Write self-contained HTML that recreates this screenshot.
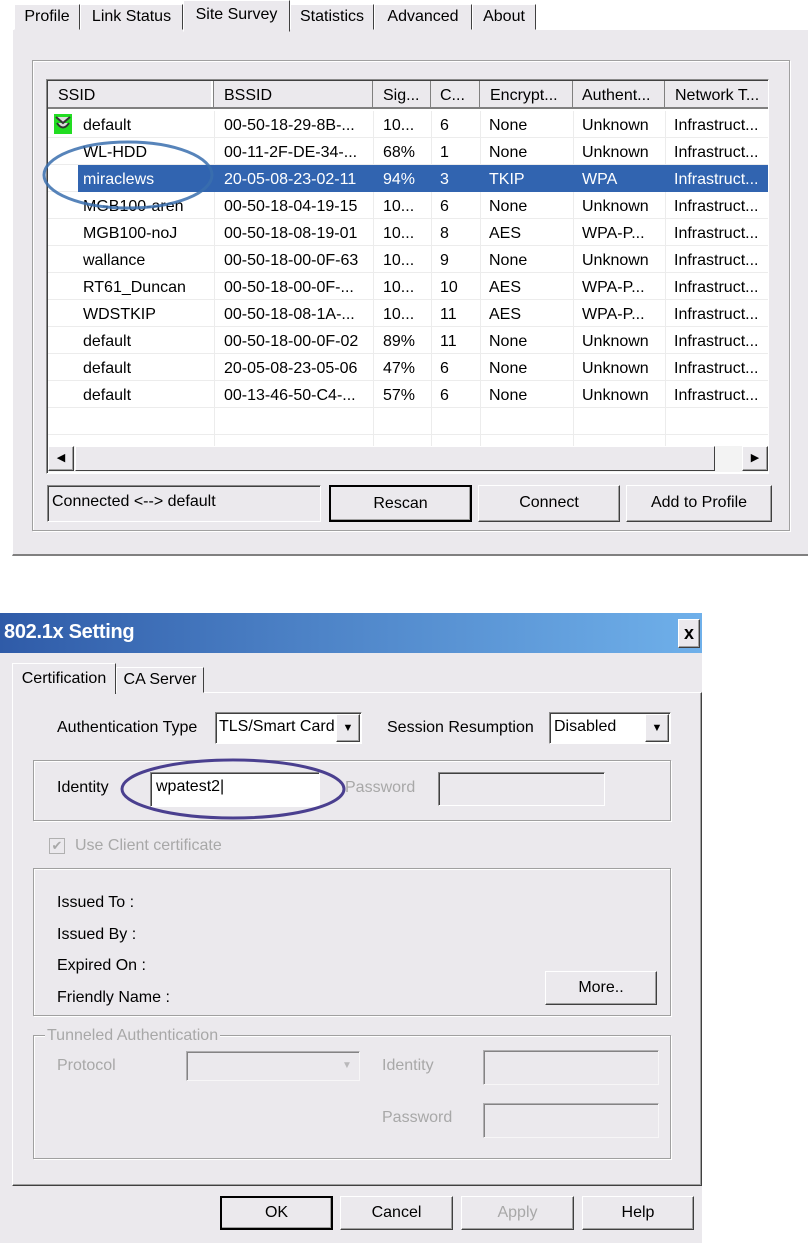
<!DOCTYPE html>
<html><head><meta charset="utf-8"><style>
*{box-sizing:border-box;margin:0;padding:0}
body{width:808px;height:1243px;background:#fff;position:relative;font-family:"Liberation Sans",sans-serif;font-size:16px;color:#000;overflow:hidden}
.a{position:absolute}
.bg{background:#ebe9ed}
.sunk{border:1px solid;border-color:#8a8a8a #fff #fff #8a8a8a;box-shadow:inset 1px 1px 0 #404040}
.grp{border:1px solid #a0a0a0;box-shadow:1px 1px 0 #fff, inset 1px 1px 0 #fff}
.btn{position:absolute;background:#ebe9ed;border:1px solid;border-color:#fff #404040 #404040 #fff;box-shadow:inset -1px -1px 0 #a0a0a0;text-align:center;line-height:34px}
.tab{position:absolute;top:4px;height:26px;border:1px solid;border-color:#fff #404040 transparent #fff;background:#ebe9ed;text-align:center;line-height:24px}
.row{position:absolute;left:0;height:27px;width:720px;border-bottom:1px solid #ececec}
.row span{position:absolute;top:6px;white-space:nowrap}
.sel{background:#3164b0;color:#fff}
.dis{color:#a8a8a8}
</style></head><body>
<div class="a bg" style="left:12px;top:29px;width:796px;height:527px;border-top:1px solid #fff;border-left:1px solid #fff;border-bottom:2px solid #808080"></div>
<div class="tab" style="left:14px;width:66px">Profile</div>
<div class="tab" style="left:80px;width:103px">Link Status</div>
<div class="tab" style="left:290px;width:84px">Statistics</div>
<div class="tab" style="left:374px;width:98px">Advanced</div>
<div class="tab" style="left:472px;width:64px">About</div>
<div class="tab" style="left:183px;width:107px;top:0;height:32px;padding-top:2px;z-index:2">Site Survey</div>
<div class="a grp" style="left:32px;top:60px;width:758px;height:471px"></div>
<div class="a sunk" style="left:46px;top:79px;width:723px;height:395px;background:#fff;overflow:hidden">
 <div class="a bg" style="left:1px;top:1px;width:720px;height:28px"></div>
 <div class="a" style="left:1px;top:1px;width:720px;height:28px;font-size:16px">
  <div class="a" style="left:0;width:166px;height:28px;border-right:1px solid #808080;box-shadow:inset -2px 0 0 #fff;padding:6px 10px">SSID</div>
  <div class="a" style="left:166px;width:159px;height:28px;border-right:1px solid #808080;padding:6px 10px">BSSID</div>
  <div class="a" style="left:325px;width:58px;height:28px;border-right:1px solid #808080;padding:6px 10px">Sig...</div>
  <div class="a" style="left:383px;width:49px;height:28px;border-right:1px solid #808080;padding:6px 9px">C...</div>
  <div class="a" style="left:432px;width:93px;height:28px;border-right:1px solid #808080;padding:6px 10px">Encrypt...</div>
  <div class="a" style="left:525px;width:92px;height:28px;border-right:1px solid #808080;padding:6px 9px">Authent...</div>
  <div class="a" style="left:617px;width:110px;height:28px;padding:6px 10px">Network T...</div>
  <div class="a" style="left:0;top:26px;width:720px;height:2px;background:#808080"></div>
 </div>
 <div class="a" style="left:1px;top:31px;width:720px;height:340px">
  <div class="a" style="left:166px;top:0;width:1px;height:340px;background:#ececec"></div>
  <div class="a" style="left:325px;top:0;width:1px;height:340px;background:#ececec"></div>
  <div class="a" style="left:383px;top:0;width:1px;height:340px;background:#ececec"></div>
  <div class="a" style="left:432px;top:0;width:1px;height:340px;background:#ececec"></div>
  <div class="a" style="left:525px;top:0;width:1px;height:340px;background:#ececec"></div>
  <div class="a" style="left:617px;top:0;width:1px;height:340px;background:#ececec"></div>
  <div class="row" style="top:0"><div class="a" style="left:6px;top:3px;width:18px;height:20px;background:#22dd22"><svg width="18" height="20"><path d="M2 3 L9 9 L16 3 M3 9 Q9 18 15 9" stroke="#333" stroke-width="2" fill="#ddd"/></svg></div><span style="left:35px">default</span><span style="left:176px">00-50-18-29-8B-...</span><span style="left:335px">10...</span><span style="left:392px">6</span><span style="left:441px">None</span><span style="left:534px">Unknown</span><span style="left:626px">Infrastruct...</span></div>
  <div class="row" style="top:27px"><span style="left:35px">WL-HDD</span><span style="left:176px">00-11-2F-DE-34-...</span><span style="left:335px">68%</span><span style="left:392px">1</span><span style="left:441px">None</span><span style="left:534px">Unknown</span><span style="left:626px">Infrastruct...</span></div>
  <div class="row" style="top:54px;"><div class="a sel" style="left:30px;top:0;width:690px;height:27px"></div><span style="left:35px;color:#fff">miraclews</span><span style="left:176px;color:#fff">20-05-08-23-02-11</span><span style="left:335px;color:#fff">94%</span><span style="left:392px;color:#fff">3</span><span style="left:441px;color:#fff">TKIP</span><span style="left:534px;color:#fff">WPA</span><span style="left:626px;color:#fff">Infrastruct...</span></div>
  <div class="row" style="top:81px"><span style="left:35px">MGB100-aren</span><span style="left:176px">00-50-18-04-19-15</span><span style="left:335px">10...</span><span style="left:392px">6</span><span style="left:441px">None</span><span style="left:534px">Unknown</span><span style="left:626px">Infrastruct...</span></div>
  <div class="row" style="top:108px"><span style="left:35px">MGB100-noJ</span><span style="left:176px">00-50-18-08-19-01</span><span style="left:335px">10...</span><span style="left:392px">8</span><span style="left:441px">AES</span><span style="left:534px">WPA-P...</span><span style="left:626px">Infrastruct...</span></div>
  <div class="row" style="top:135px"><span style="left:35px">wallance</span><span style="left:176px">00-50-18-00-0F-63</span><span style="left:335px">10...</span><span style="left:392px">9</span><span style="left:441px">None</span><span style="left:534px">Unknown</span><span style="left:626px">Infrastruct...</span></div>
  <div class="row" style="top:162px"><span style="left:35px">RT61_Duncan</span><span style="left:176px">00-50-18-00-0F-...</span><span style="left:335px">10...</span><span style="left:392px">10</span><span style="left:441px">AES</span><span style="left:534px">WPA-P...</span><span style="left:626px">Infrastruct...</span></div>
  <div class="row" style="top:189px"><span style="left:35px">WDSTKIP</span><span style="left:176px">00-50-18-08-1A-...</span><span style="left:335px">10...</span><span style="left:392px">11</span><span style="left:441px">AES</span><span style="left:534px">WPA-P...</span><span style="left:626px">Infrastruct...</span></div>
  <div class="row" style="top:216px"><span style="left:35px">default</span><span style="left:176px">00-50-18-00-0F-02</span><span style="left:335px">89%</span><span style="left:392px">11</span><span style="left:441px">None</span><span style="left:534px">Unknown</span><span style="left:626px">Infrastruct...</span></div>
  <div class="row" style="top:243px"><span style="left:35px">default</span><span style="left:176px">20-05-08-23-05-06</span><span style="left:335px">47%</span><span style="left:392px">6</span><span style="left:441px">None</span><span style="left:534px">Unknown</span><span style="left:626px">Infrastruct...</span></div>
  <div class="row" style="top:270px"><span style="left:35px">default</span><span style="left:176px">00-13-46-50-C4-...</span><span style="left:335px">57%</span><span style="left:392px">6</span><span style="left:441px">None</span><span style="left:534px">Unknown</span><span style="left:626px">Infrastruct...</span></div>
  <div class="row" style="top:297px"></div>
 </div>
 <div class="a" style="left:1px;top:366px;width:720px;height:26px;background:#f3f3f3">
  <div class="btn" style="left:0;top:0;width:26px;height:25px;line-height:22px;font-size:11px">◀</div>
  <div class="btn" style="left:694px;top:0;width:26px;height:25px;line-height:22px;font-size:11px">▶</div>
  <div class="a" style="left:27px;top:0;width:640px;height:25px;background:#ebe9ed;border:1px solid;border-color:#fff #404040 #404040 #fff"></div>
 </div>
</div>
<svg class="a" style="left:40px;top:135px" width="180" height="80"><ellipse cx="88" cy="40" rx="84" ry="33" fill="none" stroke="#3a6fae" stroke-width="3" opacity="0.85"/></svg>
<div class="a sunk" style="left:47px;top:485px;width:274px;height:37px;padding:5px 4px;line-height:22px">Connected &lt;--&gt; default</div>
<div class="btn" style="left:329px;top:485px;width:143px;height:37px;border:2px solid #000;line-height:34px">Rescan</div>
<div class="btn" style="left:478px;top:485px;width:142px;height:37px">Connect</div>
<div class="btn" style="left:626px;top:485px;width:146px;height:37px">Add to Profile</div>

<div class="a bg" style="left:0;top:613px;width:702px;height:630px"></div>
<div class="a" style="left:0;top:613px;width:702px;height:40px;background:linear-gradient(90deg,#2f5ba8,#4a7fc4 40%,#6fb0ea);color:#fff;font-weight:bold;font-size:20px;padding:8px 4px;letter-spacing:-0.3px">802.1x Setting</div>
<div class="btn" style="left:678px;top:619px;width:22px;height:29px;line-height:27px;font-weight:bold;font-size:18px">x</div>
<div class="a" style="left:12px;top:692px;width:690px;height:494px;border:1px solid;border-color:#fff #404040 #404040 #fff;box-shadow:inset -1px -1px 0 #a0a0a0"></div>
<div class="tab" style="left:116px;top:667px;height:26px;width:88px">CA Server</div>
<div class="tab" style="left:12px;top:663px;height:31px;width:104px;z-index:2;padding-top:3px;border-bottom:none">Certification</div>
<div class="a" style="left:57px;top:719px">Authentication Type</div>
<div class="a sunk" style="left:215px;top:712px;width:147px;height:32px;background:#fff;padding:5px 3px;overflow:hidden;white-space:nowrap">TLS/Smart Card<div class="btn" style="left:120px;top:1px;width:24px;height:28px;line-height:26px;font-size:11px">▼</div></div>
<div class="a" style="left:387px;top:719px">Session Resumption</div>
<div class="a sunk" style="left:549px;top:712px;width:122px;height:32px;background:#fff;padding:5px 4px">Disabled<div class="btn" style="left:95px;top:1px;width:24px;height:28px;line-height:26px;font-size:11px">▼</div></div>
<div class="a grp" style="left:33px;top:760px;width:638px;height:61px"></div>
<div class="a" style="left:57px;top:779px">Identity</div>
<div class="a sunk" style="left:150px;top:772px;width:170px;height:35px;background:#fff;padding:5px 5px">wpatest2|</div>
<div class="a dis" style="left:345px;top:779px">Password</div>
<div class="a sunk" style="left:438px;top:772px;width:167px;height:34px"></div>
<svg class="a" style="left:118px;top:756px" width="230" height="66"><ellipse cx="115" cy="33" rx="111" ry="29" fill="none" stroke="#4a3f8f" stroke-width="3"/></svg>
<div class="a" style="left:49px;top:838px;width:16px;height:16px;border:1px solid #b0b0b0;background:#ebe9ed;color:#a8a8a8;font-size:13px;line-height:14px;text-align:center">✔</div>
<div class="a dis" style="left:75px;top:837px">Use Client certificate</div>
<div class="a grp" style="left:33px;top:868px;width:638px;height:148px"></div>
<div class="a" style="left:57px;top:894px">Issued To :</div>
<div class="a" style="left:57px;top:926px">Issued By :</div>
<div class="a" style="left:57px;top:957px">Expired On :</div>
<div class="a" style="left:57px;top:989px">Friendly Name :</div>
<div class="btn" style="left:545px;top:971px;width:112px;height:34px;line-height:31px">More..</div>
<div class="a grp" style="left:33px;top:1035px;width:638px;height:124px"></div>
<div class="a dis bg" style="left:45px;top:1027px;padding:0 2px">Tunneled Authentication</div>
<div class="a dis" style="left:57px;top:1057px">Protocol</div>
<div class="a sunk" style="left:186px;top:1051px;width:174px;height:30px;opacity:.6"><div class="a" style="left:150px;top:1px;width:20px;height:26px;color:#999;font-size:10px;text-align:center;line-height:26px">▼</div></div>
<div class="a dis" style="left:382px;top:1057px">Identity</div>
<div class="a sunk" style="left:483px;top:1050px;width:176px;height:35px;opacity:.6"></div>
<div class="a dis" style="left:382px;top:1109px">Password</div>
<div class="a sunk" style="left:483px;top:1103px;width:176px;height:35px;opacity:.6"></div>
<div class="btn" style="left:220px;top:1196px;width:113px;height:34px;border:2px solid #000;line-height:30px">OK</div>
<div class="btn" style="left:340px;top:1196px;width:113px;height:34px;line-height:31px">Cancel</div>
<div class="btn dis" style="left:461px;top:1196px;width:113px;height:34px;line-height:31px">Apply</div>
<div class="btn" style="left:582px;top:1196px;width:112px;height:34px;line-height:31px">Help</div>
</body></html>
